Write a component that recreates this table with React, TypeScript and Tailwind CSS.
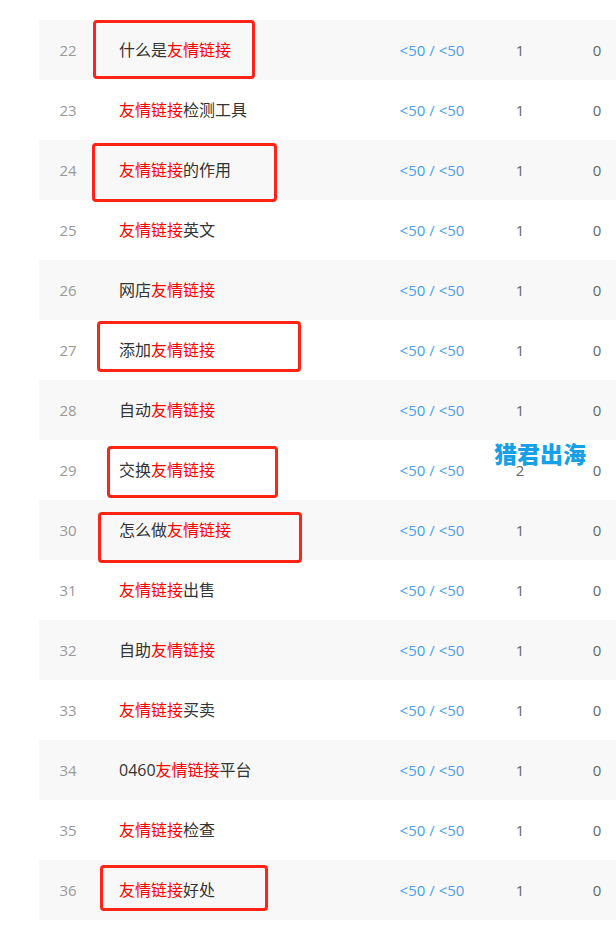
import React from "react";

type Seg = { t: string; red?: boolean };
type Row = { n: number; name: Seg[]; a: string; b: string };

const K = "友情链接";
const rows: Row[] = [
  { n: 22, name: [{ t: "什么是" }, { t: K, red: true }], a: "1", b: "0" },
  { n: 23, name: [{ t: K, red: true }, { t: "检测工具" }], a: "1", b: "0" },
  { n: 24, name: [{ t: K, red: true }, { t: "的作用" }], a: "1", b: "0" },
  { n: 25, name: [{ t: K, red: true }, { t: "英文" }], a: "1", b: "0" },
  { n: 26, name: [{ t: "网店" }, { t: K, red: true }], a: "1", b: "0" },
  { n: 27, name: [{ t: "添加" }, { t: K, red: true }], a: "1", b: "0" },
  { n: 28, name: [{ t: "自动" }, { t: K, red: true }], a: "1", b: "0" },
  { n: 29, name: [{ t: "交换" }, { t: K, red: true }], a: "2", b: "0" },
  { n: 30, name: [{ t: "怎么做" }, { t: K, red: true }], a: "1", b: "0" },
  { n: 31, name: [{ t: K, red: true }, { t: "出售" }], a: "1", b: "0" },
  { n: 32, name: [{ t: "自助" }, { t: K, red: true }], a: "1", b: "0" },
  { n: 33, name: [{ t: K, red: true }, { t: "买卖" }], a: "1", b: "0" },
  { n: 34, name: [{ t: "0460" }, { t: K, red: true }, { t: "平台" }], a: "1", b: "0" },
  { n: 35, name: [{ t: K, red: true }, { t: "检查" }], a: "1", b: "0" },
  { n: 36, name: [{ t: K, red: true }, { t: "好处" }], a: "1", b: "0" },
];

export default function App() {
  return (
    <div
      className="relative w-[616px] h-[927px] bg-white overflow-hidden"
      style={{ fontFamily: '"Open Sans", "Noto Sans CJK SC", sans-serif' }}
    >
      <div className="pt-[20px] pl-[39px]">
        {rows.map((r, i) => (
          <div
            key={r.n}
            className={`grid grid-cols-[58px_283px_104px_72px_22px_38px] h-[60px] items-center ${
              i % 2 === 0 ? "bg-[#f8f8f8]" : "bg-white"
            }`}
          >
            <div className="text-center text-[15px] text-[#999999]">{r.n}</div>
            <div className="pl-[22px] text-[16px] text-[#333333] whitespace-nowrap">
              {r.name.map((s, j) => (
                <span key={j} className={s.red ? "text-[#ff0000]" : ""}>
                  {s.t}
                </span>
              ))}
            </div>
            <div className="text-center text-[15px] text-[#4a9ff0] whitespace-nowrap">&lt;50 / &lt;50</div>
            <div className="text-center text-[15px] text-[#666666]">{r.a}</div>
            <div />
            <div className="text-center text-[15px] text-[#666666]">{r.b}</div>
          </div>
        ))}
      </div>

      {/* annotation boxes */}
      <div className="absolute left-[93px] top-[20px] w-[162px] h-[59px] border-[3px] border-[#ff2414] rounded-[4px]" />
      <div className="absolute left-[92px] top-[143px] w-[185px] h-[59px] border-[3px] border-[#ff2414] rounded-[4px]" />
      <div className="absolute left-[97px] top-[321px] w-[204px] h-[51px] border-[3px] border-[#ff2414] rounded-[4px]" />
      <div className="absolute left-[107px] top-[446px] w-[171px] h-[52px] border-[3px] border-[#ff2414] rounded-[4px]" />
      <div className="absolute left-[98px] top-[512px] w-[204px] h-[51px] border-[3px] border-[#ff2414] rounded-[4px]" />
      <div className="absolute left-[100px] top-[865px] w-[168px] h-[46px] border-[3px] border-[#ff2414] rounded-[4px]" />

      {/* watermark */}
      <div
        className="absolute left-[494px] top-[439px] text-[23px] leading-[28px] font-black text-[#16a0e6]"
        style={{ fontFamily: '"Noto Sans CJK SC", sans-serif' }}
      >
        猎君出海
      </div>
    </div>
  );
}
